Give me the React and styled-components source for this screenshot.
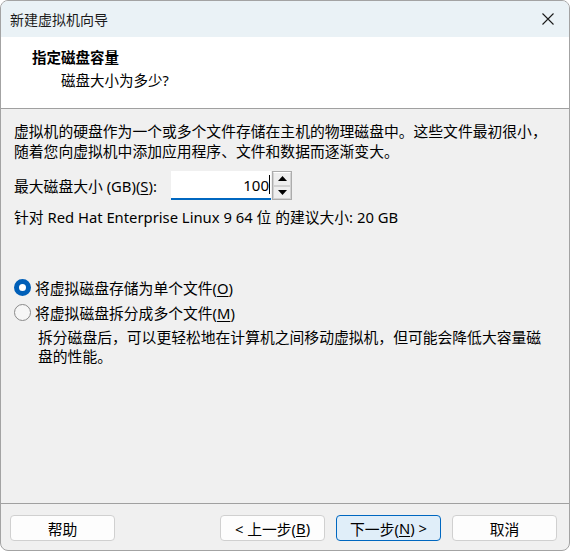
import React from 'react';
import styled, { createGlobalStyle } from 'styled-components';

const GlobalStyle = createGlobalStyle`
  html, body {
    margin: 0;
    padding: 0;
    background: #ffffff;
  }
  body {
    font-family: "Segoe UI", "Noto Sans", "Noto Sans CJK SC", sans-serif;
    color: #000000;
  }
`;

function CloseIcon() {
  return (
    <svg width="12" height="12" viewBox="0 0 12 12">
      <path d="M0.5 0.5 L11.5 11.5 M11.5 0.5 L0.5 11.5" stroke="#1b1b1b" strokeWidth="1.1" fill="none" />
    </svg>
  );
}

function Arrow({ up }) {
  return (
    <svg width="9" height="5" viewBox="0 0 9 5">
      <path d={up ? 'M0 5 L4.5 0 L9 5 Z' : 'M0 0 L4.5 5 L9 0 Z'} fill="#000" />
    </svg>
  );
}

function Key({ children }) {
  return <Mnemonic>{children}</Mnemonic>;
}

function App() {
  return (
    <>
      <GlobalStyle />
      <Window>
        <TitleBar>
          <Title>新建虚拟机向导</Title>
          <CloseButton>
            <CloseIcon />
          </CloseButton>
        </TitleBar>

        <Header>
          <Heading>指定磁盘容量</Heading>
          <SubHeading>磁盘大小为多少?</SubHeading>
        </Header>

        <Body>
          <Paragraph>
            虚拟机的硬盘作为一个或多个文件存储在主机的物理磁盘中。这些文件最初很小，
            <br />
            随着您向虚拟机中添加应用程序、文件和数据而逐渐变大。
          </Paragraph>

          <SizeRow>
            <Label>
              最大磁盘大小 (GB)(<Key>S</Key>):
            </Label>
            <Spin>
              <SpinField>
                100<Caret />
              </SpinField>
              <SpinButtons>
                <SpinHalf>
                  <Arrow up />
                </SpinHalf>
                <SpinHalf bottom>
                  <Arrow />
                </SpinHalf>
              </SpinButtons>
            </Spin>
          </SizeRow>

          <Hint>针对 Red Hat Enterprise Linux 9 64 位 的建议大小: 20 GB</Hint>

          <Options>
            <RadioRow>
              <Radio checked />
              <span>
                将虚拟磁盘存储为单个文件(<Key>O</Key>)
              </span>
            </RadioRow>
            <RadioRow>
              <Radio />
              <span>
                将虚拟磁盘拆分成多个文件(<Key>M</Key>)
              </span>
            </RadioRow>
            <Description>
              拆分磁盘后，可以更轻松地在计算机之间移动虚拟机，但可能会降低大容量磁
              <br />
              盘的性能。
            </Description>
          </Options>
        </Body>

        <Footer>
          <Button>帮助</Button>
          <Spacer />
          <Button>
            &lt; 上一步(<Key>B</Key>)
          </Button>
          <Button primary>
            下一步(<Key>N</Key>) &gt;
          </Button>
          <Button>取消</Button>
        </Footer>
      </Window>
    </>
  );
}

export default App;

const Window = styled.div`
  box-sizing: border-box;
  width: 570px;
  height: 551px;
  border: 1px solid #a3a3a3;
  border-radius: 8px;
  overflow: hidden;
  display: flex;
  flex-direction: column;
  background: #f0f0f0;
`;

const TitleBar = styled.div`
  height: 36px;
  flex: none;
  display: flex;
  align-items: center;
  justify-content: space-between;
  padding: 0 15px 0 9px;
  background: #eaf2f6;
`;

const Title = styled.div`
  font-size: 14px;
  color: #1a1a1a;
  line-height: 1;
  margin-top: 1px;
`;

const CloseButton = styled.div`
  display: flex;
  align-items: center;
  margin-top: -1px;
`;

const Header = styled.div`
  height: 72px;
  flex: none;
  box-sizing: border-box;
  background: #ffffff;
  border-bottom: 1px solid #a0a0a0;
  padding: 9px 0 0 31px;
  display: flex;
  flex-direction: column;
`;

const Heading = styled.div`
  font-size: 14.5px;
  font-weight: 700;
  line-height: 22px;
`;

const SubHeading = styled.div`
  font-size: 14.5px;
  line-height: 22px;
  padding-left: 29px;
  margin-top: 1px;
`;

const Body = styled.div`
  flex: 1;
  padding: 12px 0 0 13px;
  font-size: 14.8px;
  display: flex;
  flex-direction: column;
`;

const Paragraph = styled.div`
  line-height: 20px;
  white-space: nowrap;
`;

const SizeRow = styled.div`
  display: flex;
  align-items: center;
  margin-top: 10px;
  height: 29px;
`;

const Label = styled.div`
  width: 157px;
  white-space: nowrap;
`;

const Mnemonic = styled.span`
  text-decoration: underline;
  text-underline-offset: 2px;
`;

const Spin = styled.div`
  display: flex;
  height: 29px;
`;

const SpinField = styled.div`
  box-sizing: border-box;
  width: 100px;
  height: 29px;
  background: #ffffff;
  border-bottom: 2px solid #0067c0;
  display: flex;
  align-items: center;
  justify-content: flex-end;
  padding-right: 1px;
  font-size: 15px;
`;

const Caret = styled.span`
  display: inline-block;
  width: 1px;
  height: 19px;
  background: #000;
`;

const SpinButtons = styled.div`
  box-sizing: border-box;
  width: 20px;
  height: 29px;
  margin-left: 1px;
  border: 1px solid #acacac;
  display: flex;
  flex-direction: column;
  background: #f0f0f0;
`;

const SpinHalf = styled.div`
  flex: 1;
  display: flex;
  align-items: center;
  justify-content: center;
  border: 1px solid #d2d2d2;
  border-top-color: ${(p) => (p.bottom ? '#d2d2d2' : '#ffffff')};
  background: #eeeeee;
`;

const Hint = styled.div`
  margin-top: 7px;
  line-height: 20px;
  white-space: nowrap;
`;

const Options = styled.div`
  margin-top: 48px;
  display: flex;
  flex-direction: column;
`;

const RadioRow = styled.div`
  display: flex;
  align-items: center;
  gap: 4px;
  height: 25px;
  white-space: nowrap;
`;

const Radio = styled.span`
  box-sizing: border-box;
  width: 17px;
  height: 17px;
  border-radius: 50%;
  flex: none;
  background: ${(p) => (p.checked ? '#ffffff' : '#f6f6f6')};
  border: ${(p) => (p.checked ? '5px solid #005fb8' : '1px solid #8a8a8a')};
`;

const Description = styled.div`
  padding-left: 24px;
  margin-top: 3px;
  line-height: 19px;
  white-space: nowrap;
`;

const Footer = styled.div`
  height: 47px;
  flex: none;
  box-sizing: border-box;
  border-top: 1px solid #a0a0a0;
  display: flex;
  align-items: flex-start;
  gap: 11px;
  padding: 11px 12px 0 9px;
`;

const Spacer = styled.div`
  flex: 1;
`;

const Button = styled.div`
  box-sizing: border-box;
  width: 105px;
  height: 26px;
  border-radius: 4px;
  border: 1px solid ${(p) => (p.primary ? '#0067c0' : '#d0d0d0')};
  background: ${(p) => (p.primary ? '#e0eef9' : '#fdfdfd')};
  display: flex;
  align-items: center;
  justify-content: center;
  font-size: 14.8px;
  white-space: nowrap;
`;
